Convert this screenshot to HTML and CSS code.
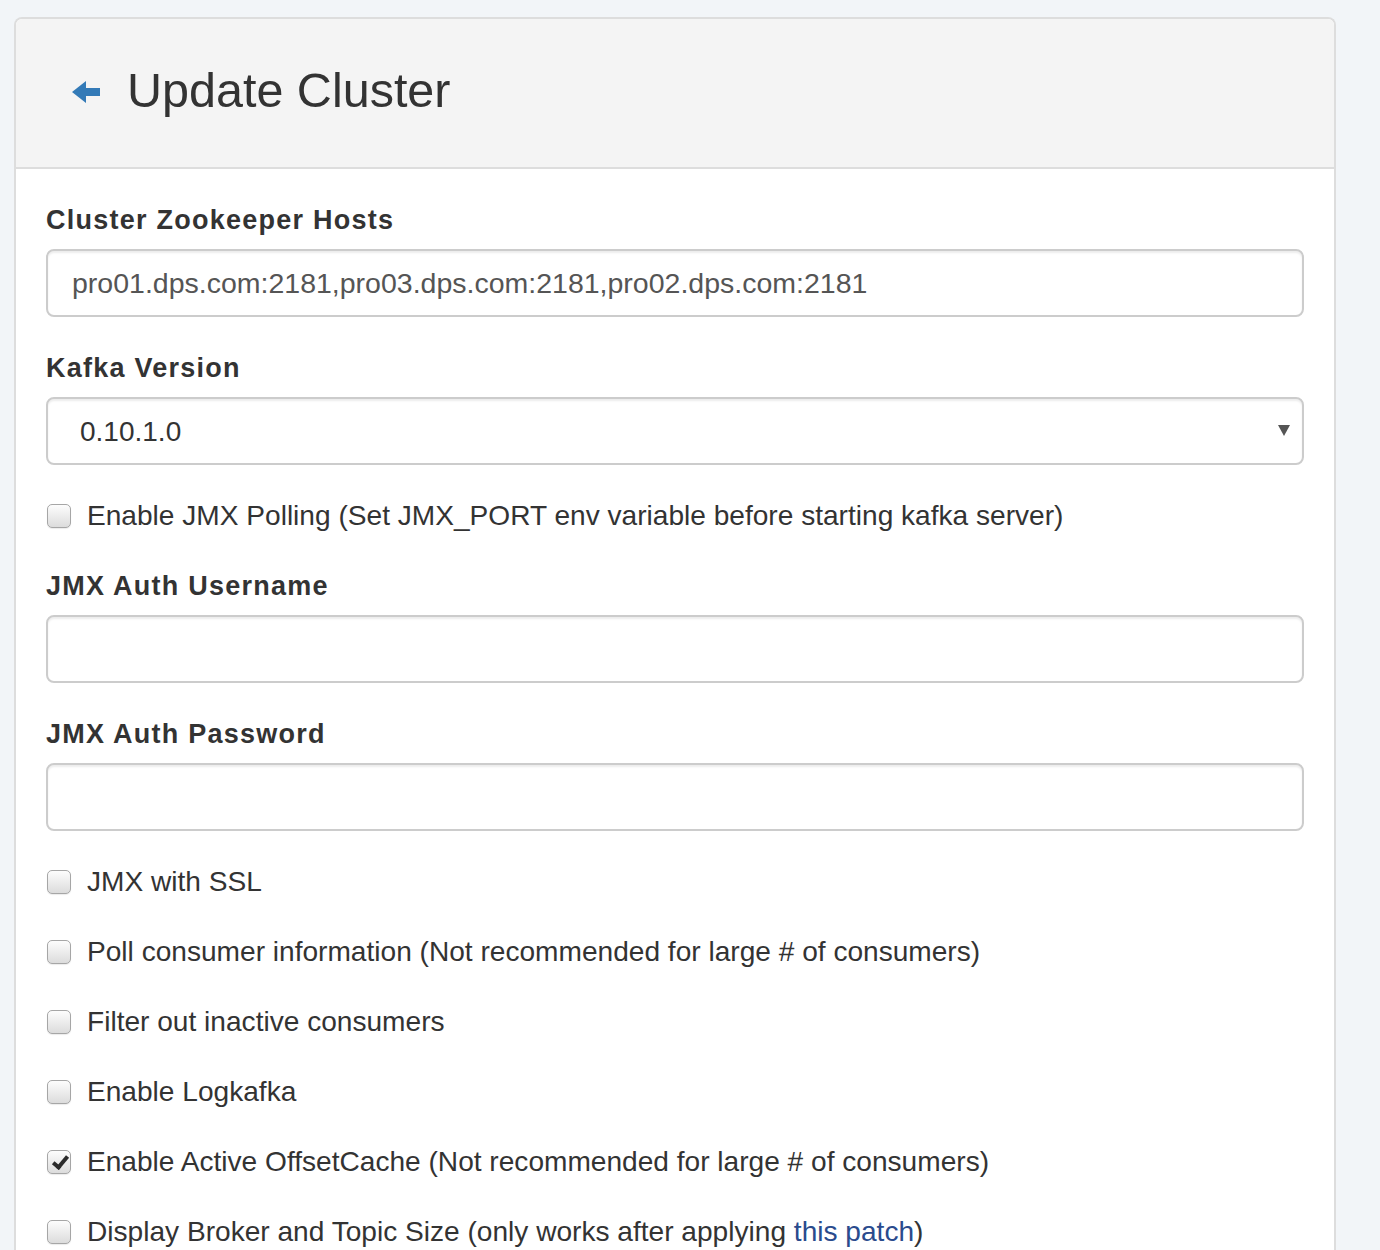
FILE: index.html
```html
<!DOCTYPE html>
<html>
<head>
<meta charset="utf-8">
<link rel="stylesheet" href="styles.css">
</head>
<body>
<div class="panel">
  <div class="panel-heading">
    <a class="back" href="#"><svg width="29" height="24" viewBox="0 0 29 24"><path d="M0 12 L14 1 L14 8 L28 8 L28 16 L14 16 L14 23 Z" fill="#337ab7"/></svg></a>
    <h2 class="title">Update Cluster</h2>
  </div>
  <div class="panel-body">
    <div class="form-group">
      <label class="label">Cluster Zookeeper Hosts</label>
      <input class="control" type="text" value="pro01.dps.com:2181,pro03.dps.com:2181,pro02.dps.com:2181">
    </div>
    <div class="form-group">
      <label class="label">Kafka Version</label>
      <div class="select-wrap">
        <select class="control select"><option>0.10.1.0</option></select>
      </div>
    </div>
    <div class="check"><label><input type="checkbox">Enable JMX Polling (Set JMX_PORT env variable before starting kafka server)</label></div>
    <div class="form-group">
      <label class="label">JMX Auth Username</label>
      <input class="control" type="text">
    </div>
    <div class="form-group">
      <label class="label">JMX Auth Password</label>
      <input class="control" type="password">
    </div>
    <div class="check"><label><input type="checkbox">JMX with SSL</label></div>
    <div class="check"><label><input type="checkbox">Poll consumer information (Not recommended for large # of consumers)</label></div>
    <div class="check"><label><input type="checkbox">Filter out inactive consumers</label></div>
    <div class="check"><label><input type="checkbox">Enable Logkafka</label></div>
    <div class="check"><label><input type="checkbox" checked>Enable Active OffsetCache (Not recommended for large # of consumers)</label></div>
    <div class="check"><label><input type="checkbox">Display Broker and Topic Size (only works after applying <a class="link" href="#">this patch</a>)</label></div>
  </div>
</div>
</body>
</html>
```
FILE: styles.css
```css
html, body {
  margin: 0;
  padding: 0;
  background: #f2f5f8;
  font-family: "Liberation Sans", Arial, sans-serif;
  color: #333;
}
body {
  padding: 17px 0 0 14px;
}
.panel {
  width: 1318px;
  border: 2px solid #dddddd;
  border-bottom: none;
  border-radius: 8px 8px 0 0;
  background: #fff;
}
.panel-heading {
  height: 150px;
  box-sizing: border-box;
  background: #f4f4f4;
  border-bottom: 2px solid #dddddd;
  border-radius: 6px 6px 0 0;
  display: flex;
  align-items: center;
  padding-left: 56px;
  padding-bottom: 6px;
}
.back {
  display: flex;
  width: 29px;
  margin-top: 4px;
}
.title {
  margin: 0 0 0 26px;
  font-size: 48.5px;
  font-weight: normal;
  color: #333;
  line-height: 1;
}
.panel-body {
  padding: 31px 30px 0 30px;
}
.form-group {
  margin-bottom: 31px;
}
.label {
  display: block;
  font-weight: bold;
  font-size: 27px;
  letter-spacing: 1.25px;
  line-height: 40px;
  margin-bottom: 9px;
  color: #333;
}
.control {
  display: block;
  width: 100%;
  height: 68px;
  box-sizing: border-box;
  border: 2px solid #cccccc;
  border-radius: 8px;
  padding: 0 24px;
  font-family: "Liberation Sans", Arial, sans-serif;
  font-size: 28.5px;
  color: #555;
  background: #fff;
  box-shadow: inset 0 2px 2px rgba(0,0,0,0.075);
  outline: none;
}
.select-wrap {
  position: relative;
}
.select {
  appearance: none;
  -webkit-appearance: none;
  padding-left: 32px;
  font-size: 28px;
  color: #333;
}
.select-wrap::after {
  content: "";
  position: absolute;
  right: 14px;
  top: 28px;
  width: 0;
  height: 0;
  border-left: 6px solid transparent;
  border-right: 6px solid transparent;
  border-top: 11px solid #555;
  pointer-events: none;
}
.check {
  margin-bottom: 30px;
  line-height: 40px;
  font-size: 28.1px;
  color: #333;
}
.check label {
  display: flex;
  align-items: center;
  white-space: pre;
}
.check input {
  appearance: none;
  -webkit-appearance: none;
  width: 24px;
  height: 24px;
  margin: 0 16px 0 1px;
  border: 1px solid #a6a6a6;
  border-radius: 5px;
  background: linear-gradient(#fdfdfd, #dcdcdc);
  box-shadow: 0 1px 1px rgba(0,0,0,0.08);
  box-sizing: border-box;
  flex: none;
  position: relative;
}
.check input:checked::after {
  content: "";
  position: absolute;
  left: 8px;
  top: 2px;
  width: 5px;
  height: 12px;
  border-right: 4px solid #2a2a2a;
  border-bottom: 4px solid #2a2a2a;
  transform: rotate(40deg);
}
.link {
  color: #2a4b8d;
  text-decoration: none;
}
```
